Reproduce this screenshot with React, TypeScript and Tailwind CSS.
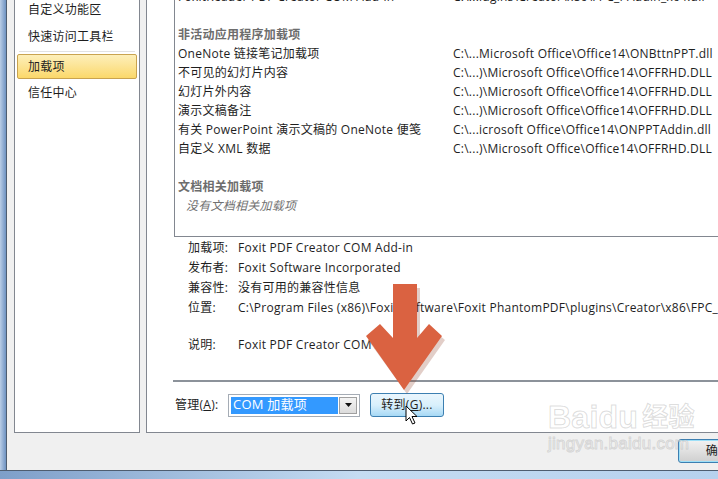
import React from 'react'

const font = { fontFamily: '"Open Sans", "Noto Sans CJK SC", sans-serif' }

const inactive: [string, string][] = [
  ['OneNote 链接笔记加载项', 'C:\\...Microsoft Office\\Office14\\ONBttnPPT.dll'],
  ['不可见的幻灯片内容', 'C:\\...)\\Microsoft Office\\Office14\\OFFRHD.DLL'],
  ['幻灯片外内容', 'C:\\...)\\Microsoft Office\\Office14\\OFFRHD.DLL'],
  ['演示文稿备注', 'C:\\...)\\Microsoft Office\\Office14\\OFFRHD.DLL'],
  ['有关 PowerPoint 演示文稿的 OneNote 便笺', 'C:\\...icrosoft Office\\Office14\\ONPPTAddin.dll'],
  ['自定义 XML 数据', 'C:\\...)\\Microsoft Office\\Office14\\OFFRHD.DLL'],
]

const details: [string, string][] = [
  ['加载项:', 'Foxit PDF Creator COM Add-in'],
  ['发布者:', 'Foxit Software Incorporated'],
  ['兼容性:', '没有可用的兼容性信息'],
  ['位置:', 'C:\\Program Files (x86)\\Foxit Software\\Foxit PhantomPDF\\plugins\\Creator\\x86\\FPC_PAddin_x86.dll'],
]

function Row({ name, path }: { name: string; path: string }) {
  return (
    <div className="flex h-[19px] items-center whitespace-nowrap">
      <div className="w-[275px] shrink-0">{name}</div>
      <div>{path}</div>
    </div>
  )
}

function Sidebar() {
  return (
    <div className="w-[126px] shrink-0 border-x border-b border-[#828790] bg-white text-[12px] text-[#1e1e1e]">
      <div className="pl-[13px] pt-[1px] leading-[18px]">自定义功能区</div>
      <div className="mt-[9px] pl-[13px] leading-[18px]">快速访问工具栏</div>
      <div className="mx-[4px] mt-[5px] h-px bg-[#e2e2e2]" />
      <div className="mx-[2px] mt-[2px] flex h-[25px] items-center rounded-[2px] border border-[#c9a34f] bg-gradient-to-b from-[#fdefb9] to-[#fbd869] pl-[10px]">
        加载项
      </div>
      <div className="mt-[5px] pl-[13px] leading-[18px]">信任中心</div>
    </div>
  )
}

function Cursor() {
  return (
    <svg className="absolute left-[405px] top-[405px]" width="14" height="21" viewBox="0 0 14 21">
      <path d="M1 1 L1 16 L4.5 12.5 L7.5 19 L10 18 L7 11.5 L12 11.5 Z" fill="#fff" stroke="#000" strokeWidth="1" strokeLinejoin="round" />
    </svg>
  )
}

function Arrow() {
  return (
    <svg className="absolute left-0 top-0" width="718" height="479" viewBox="0 0 718 479">
      <polygon
        points="394,286 419,286 419,340 430,326 444,338 406,392 367,338 381,326 394,340"
        fill="#8a3a22"
        opacity="0.25"
        transform="translate(1,2)"
      />
      <polygon
        points="393,284 417,284 417,338 429,324 442,336 404,390 366,336 380,324 393,338"
        fill="#da6241"
      />
    </svg>
  )
}

function Watermark() {
  const style = {
    fontFamily: '"Liberation Sans", "Noto Sans CJK SC", sans-serif',
    WebkitTextStroke: '1px rgba(140,140,140,0.3)',
    color: 'rgba(255,255,255,0.5)',
  }
  return (
    <div className="pointer-events-none absolute left-[548px] top-[402px]" style={style}>
      <div className="flex items-end">
        <span className="text-[32px] font-bold leading-[30px]">Bai</span>
        <span className="text-[32px] font-bold leading-[30px]">du</span>
        <span className="ml-[4px] text-[26px] font-bold leading-[30px]">经验</span>
      </div>
      <div className="mt-[2px] text-[17px] leading-[20px]">jingyan.baidu.com</div>
    </div>
  )
}

export default function App() {
  return (
    <div className="relative flex h-[479px] w-[718px] flex-col overflow-hidden bg-[#f0f0f0] text-[12px] tracking-[0.25px] text-[#1e1e1e]" style={font}>
      <div className="flex min-h-0 flex-1">
        {/* window frame, left */}
        <div className="w-[7px] shrink-0 border-r border-[#4e5d70] bg-gradient-to-r from-[#b9cde6] to-[#6f93c2]" />

        <div className="flex min-w-0 flex-1 flex-col">
          <div className="flex h-[433px] gap-[6px] pl-[7px]">
            <Sidebar />

            {/* right panel */}
            <div className="flex min-w-0 flex-1 flex-col border-b border-l border-[#828790] bg-white">
              <div className="ml-[27px] h-[237px] overflow-hidden border-b border-l border-[#828790] pl-[3px]">
                <div className="mt-[-13px]">
                  <Row name="FoxitReader PDF Creator COM Add-in" path="C:\...lugins\Creator\x86\FPC_PAddin_x64.dll" />
                  <div className="h-[19px]" />
                  <div className="flex h-[19px] items-center font-semibold text-[#6d6d6d]">非活动应用程序加载项</div>
                  {inactive.map(([n, p]) => (
                    <Row key={n} name={n} path={p} />
                  ))}
                  <div className="h-[19px]" />
                  <div className="flex h-[19px] items-center font-semibold text-[#6d6d6d]">文档相关加载项</div>
                  <div className="flex h-[19px] items-center pl-[8px] italic text-[#707070]">没有文档相关加载项</div>
                </div>
              </div>

              <div className="pl-[41px] pt-[1px]">
                {details.map(([l, v]) => (
                  <div key={l} className="flex h-[20px] items-center whitespace-nowrap">
                    <div className="w-[50px] shrink-0">{l}</div>
                    <div>{v}</div>
                  </div>
                ))}
                <div className="h-[17px]" />
                <div className="flex h-[20px] items-center whitespace-nowrap">
                  <div className="w-[50px] shrink-0">说明:</div>
                  <div>Foxit PDF Creator COM Add-in</div>
                </div>
              </div>

              <div className="ml-[26px] mt-[25px] h-[2px] bg-[#8c929a]" />

              <div className="ml-[28px] mt-[11px] flex items-center">
                <div className="w-[53px]">
                  管理(<span className="underline">A</span>):
                </div>
                <div className="flex h-[23px] w-[132px] items-stretch border border-[#a5acb5] bg-white p-[2px]">
                  <div className="flex flex-1 items-center bg-[#3399ff] pl-[2px] text-[13px] text-white">COM 加载项</div>
                  <div className="ml-[1px] flex w-[18px] items-center justify-center border border-[#a0a0a0] bg-gradient-to-b from-[#f4f4f4] to-[#dcdcdc]">
                    <svg width="7" height="4" viewBox="0 0 7 4">
                      <polygon points="0,0 7,0 3.5,4" fill="#111" />
                    </svg>
                  </div>
                </div>
                <button className="ml-[10px] flex h-[24px] w-[74px] items-center justify-center rounded-[3px] border border-[#3c7fb1] bg-gradient-to-b from-[#eaf6fd] via-[#d9f0fc] to-[#a7d9f5] text-[12px] text-[#1e1e1e]">
                  转到(<span className="underline">G</span>)...
                </button>
              </div>
            </div>
          </div>

          <div className="flex flex-1 justify-end pt-[6px]">
            <button className="flex h-[24px] w-[80px] shrink-0 translate-x-[40px] items-center justify-center rounded-[3px] border border-[#3c7fb1] bg-gradient-to-b from-[#f2f2f2] to-[#cfcfcf] text-[12px] text-[#1e1e1e] shadow-[inset_0_0_0_1px_#9ee0f8]">
              确定
            </button>
          </div>
        </div>
      </div>

      {/* window frame, bottom */}
      <div className="h-[9px] shrink-0 border-t border-[#4e5d70] bg-gradient-to-r from-[#7e9fc9] via-[#c5dcf2] to-[#b6d1ee]" />

      <Arrow />
      <Cursor />
      <Watermark />
    </div>
  )
}
